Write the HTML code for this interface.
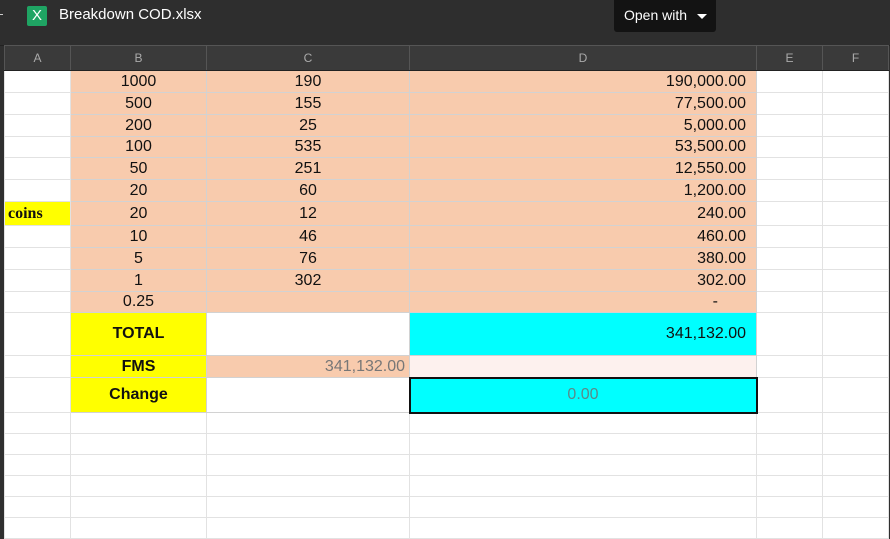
<!DOCTYPE html>
<html><head><meta charset="utf-8"><style>
body{margin:0;width:890px;height:538px;overflow:hidden;background:#2f2f2f;font-family:"Liberation Sans",Arial,sans-serif;position:relative}
.top{position:absolute;left:0;top:0;width:890px;height:45px;background:#2e2e2e;border-bottom:1px solid #222}
.xl{position:absolute;left:27px;top:6px;width:20px;height:20px;background:#1fa463;border-radius:2px;color:#fff;font-size:15px;text-align:center;line-height:20px}
.title{position:absolute;left:59px;top:6px;color:#fff;font-size:15px}
.open{position:absolute;left:614px;top:0;width:102px;height:32px;background:#131313;border-radius:0 0 3px 3px;color:#fff;font-size:14px;line-height:31px;padding-left:10px;box-sizing:border-box}
.open svg{position:absolute;left:83px;top:14px}
table{position:absolute;left:4px;top:45px;border-collapse:collapse;table-layout:fixed}
td{border:1px solid #e2e2e2;padding:0;font-size:16px;color:#111;background:#fff;overflow:hidden;white-space:nowrap;line-height:16px}
tr.h td{background:#3a3a3a;color:#aaa;font-size:12px;text-align:center;border-color:#555 #555 #222 #555}
.p{background:#f8cbad;border-color:#d2d2d2}
.c{text-align:center}.r{text-align:right;padding-right:10px}
.y{background:#ffff00;border-color:#d2d2d2;font-weight:bold;text-align:center;font-size:16px}
.cy{background:#00ffff;border-color:#d2d2d2}
</style></head><body>
<div class="top"><div style="position:absolute;left:0;top:14px;width:3px;height:1px;background:#ccc"></div><div class="xl">X</div><div class="title">Breakdown COD.xlsx</div>
<div class="open">Open with<svg width="10" height="6"><path d="M0 0h10L5 5z" fill="#fff"/></svg></div></div>
<table>
<colgroup><col style="width:66px"><col style="width:136px"><col style="width:203px"><col style="width:347px"><col style="width:66px"><col style="width:66px"></colgroup>
<tr class="h" style="height:25px"><td>A</td><td>B</td><td>C</td><td>D</td><td>E</td><td>F</td></tr>
<tr style="height:22px"><td></td><td class="p c">1000</td><td class="p c">190</td><td class="p r">190,000.00</td><td></td><td></td></tr>
<tr style="height:22px"><td></td><td class="p c">500</td><td class="p c">155</td><td class="p r">77,500.00</td><td></td><td></td></tr>
<tr style="height:22px"><td></td><td class="p c">200</td><td class="p c">25</td><td class="p r">5,000.00</td><td></td><td></td></tr>
<tr style="height:21px"><td></td><td class="p c">100</td><td class="p c">535</td><td class="p r">53,500.00</td><td></td><td></td></tr>
<tr style="height:22px"><td></td><td class="p c">50</td><td class="p c">251</td><td class="p r">12,550.00</td><td></td><td></td></tr>
<tr style="height:22px"><td></td><td class="p c">20</td><td class="p c">60</td><td class="p r">1,200.00</td><td></td><td></td></tr>
<tr style="height:24px"><td style="background:#ffff00;font-family:'Liberation Serif',serif;font-weight:bold;padding-left:3px">coins</td><td class="p c">20</td><td class="p c">12</td><td class="p r">240.00</td><td></td><td></td></tr>
<tr style="height:22px"><td></td><td class="p c">10</td><td class="p c">46</td><td class="p r">460.00</td><td></td><td></td></tr>
<tr style="height:22px"><td></td><td class="p c">5</td><td class="p c">76</td><td class="p r">380.00</td><td></td><td></td></tr>
<tr style="height:22px"><td></td><td class="p c">1</td><td class="p c">302</td><td class="p r">302.00</td><td></td><td></td></tr>
<tr style="height:21px"><td></td><td class="p c">0.25</td><td class="p c"></td><td class="p r" style="padding-right:38px">-</td><td></td><td></td></tr>
<tr style="height:43px"><td></td><td class="y">TOTAL</td><td style="border-color:#d2d2d2"></td><td class="cy r">341,132.00</td><td></td><td></td></tr>
<tr style="height:22px"><td></td><td class="y">FMS</td><td class="p" style="text-align:right;color:#777;padding-right:4px">341,132.00</td><td style="background:#fdf1ee;border-color:#d2d2d2"></td><td></td><td></td></tr>
<tr style="height:35px"><td></td><td class="y">Change</td><td style="border-color:#d2d2d2"></td><td style="background:#00ffff;border:2px solid #111;text-align:center;color:#5a8a8a">0.00</td><td></td><td></td></tr>
<tr style="height:21px"><td></td><td></td><td></td><td></td><td></td><td></td></tr>
<tr style="height:21px"><td></td><td></td><td></td><td></td><td></td><td></td></tr>
<tr style="height:21px"><td></td><td></td><td></td><td></td><td></td><td></td></tr>
<tr style="height:21px"><td></td><td></td><td></td><td></td><td></td><td></td></tr>
<tr style="height:21px"><td></td><td></td><td></td><td></td><td></td><td></td></tr>
<tr style="height:21px"><td></td><td></td><td></td><td></td><td></td><td></td></tr>
</table>
</body></html>
